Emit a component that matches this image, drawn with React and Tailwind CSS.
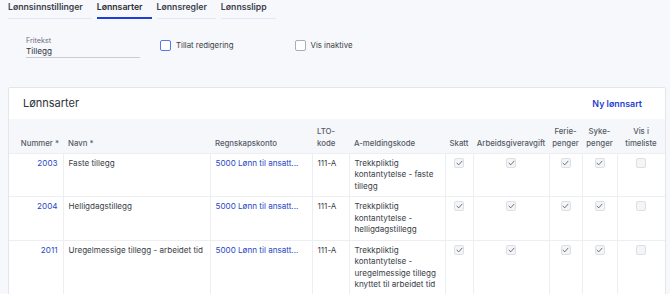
import { useState } from "react";

const tabs = ["Lønnsinnstillinger", "Lønnsarter", "Lønnsregler", "Lønnsslipp"];

const rows = [
  {
    nr: "2003",
    navn: "Faste tillegg",
    konto: "5000 Lønn til ansatt...",
    lto: "111-A",
    amelding: "Trekkpliktig kontantytelse - faste tillegg",
  },
  {
    nr: "2004",
    navn: "Helligdagstillegg",
    konto: "5000 Lønn til ansatt...",
    lto: "111-A",
    amelding: "Trekkpliktig kontantytelse - helligdagstillegg",
  },
  {
    nr: "2011",
    navn: "Uregelmessige tillegg - arbeidet tid",
    konto: "5000 Lønn til ansatt...",
    lto: "111-A",
    amelding:
      "Trekkpliktig kontantytelse - uregelmessige tillegg knyttet til arbeidet tid",
  },
];

const CellCheck = ({ checked }) => (
  <div className="flex justify-center">
    <span className="flex items-center justify-center w-[10px] h-[10px] rounded-[2px] border border-[#dcdfe4] bg-[#f4f5f7]">
      {checked && (
        <svg width="7" height="6" viewBox="0 0 7 6" fill="none">
          <path
            d="M1 3.2 L2.8 4.8 L6 1.2"
            stroke="#5b6170"
            strokeWidth="0.9"
            strokeLinecap="round"
            strokeLinejoin="round"
          />
        </svg>
      )}
    </span>
  </div>
);

const App = () => {
  const [active] = useState(1);

  return (
    <div
      className="w-[670px] h-[294px] overflow-hidden bg-[#f7f8fb] text-[#3a3e47]"
      style={{ fontFamily: "Inter, 'Noto Sans', sans-serif" }}
    >
      {/* Tabs */}
      <div className="flex gap-[5px] pl-2">
        {tabs.map((t, i) => (
          <div
            key={t}
            className={`pr-[9px] h-[19px] text-[8.7px] font-semibold leading-[15px] ${
              i === active
                ? "border-b-[2px] border-[#1d3fd4] text-[#2b2f38]"
                : "border-b-[1.5px] border-[#e2e7f3] text-[#3c414b]"
            }`}
          >
            {t}
          </div>
        ))}
      </div>

      {/* Filters */}
      <div className="flex items-start mt-[17px] pl-[26px]">
        <div className="w-[114px]">
          <div className="text-[7.2px] leading-[9px] text-[#6b7080]">Fritekst</div>
          <div className="text-[8.2px] leading-[12px] text-[#2f333c] border-b border-[#c9ccd3]">
            Tillegg
          </div>
        </div>
        <label className="flex items-center h-[11px] ml-[20px] mt-[4px]">
          <span className="w-[11px] h-[11px] rounded-[2px] border border-[#5b78e8] bg-white" />
          <span className="ml-[5px] text-[7.8px] text-[#3a3e47]">Tillat redigering</span>
        </label>
        <label className="flex items-center h-[11px] ml-[61px] mt-[4px]">
          <span className="w-[11px] h-[11px] rounded-[2px] border border-[#a9adb6] bg-white" />
          <span className="ml-[5px] text-[7.8px] text-[#3a3e47]">Vis inaktive</span>
        </label>
      </div>

      {/* Card */}
      <div className="ml-2 mt-[29px] w-[658px] bg-white border border-[#e4e6ea] rounded-[2px]">
        <div className="flex items-center justify-between h-[31px] pl-[14px] pr-[23px]">
          <h2 className="text-[11px] text-[#2f333c]">Lønnsarter</h2>
          <button className="text-[8.9px] font-semibold text-[#1f3fcf]">Ny lønnsart</button>
        </div>

        <table className="table-fixed w-full border-collapse text-[8.1px] leading-[11.5px]">
          <colgroup>
            <col className="w-[54px]" />
            <col className="w-[147px]" />
            <col className="w-[102px]" />
            <col className="w-[37px]" />
            <col className="w-[96px]" />
            <col className="w-[28px]" />
            <col className="w-[76px]" />
            <col className="w-[33px]" />
            <col className="w-[35px]" />
            <col />
          </colgroup>
          <thead>
            <tr className="bg-[#f6f7fa] h-[34px] text-[7.8px] leading-[12px] text-[#555a66]">
              <th className="align-bottom text-right px-[4px] pb-[4px] font-medium">Nummer *</th>
              <th className="align-bottom text-left px-[5px] pb-[4px] font-medium">Navn *</th>
              <th className="align-bottom text-left px-[5px] pb-[4px] font-medium">Regnskapskonto</th>
              <th className="align-bottom text-left px-[5px] pb-[4px] font-medium">
                LTO-
                <br />
                kode
              </th>
              <th className="align-bottom text-left px-[5px] pb-[4px] font-medium">A-meldingskode</th>
              <th className="align-bottom text-center pb-[4px] font-medium">Skatt</th>
              <th className="align-bottom text-center pb-[4px] font-medium">Arbeidsgiveravgift</th>
              <th className="align-bottom text-center pb-[4px] font-medium">
                Ferie-
                <br />
                penger
              </th>
              <th className="align-bottom text-center pb-[4px] font-medium">
                Syke-
                <br />
                penger
              </th>
              <th className="align-bottom text-center pb-[4px] font-medium">
                Vis i
                <br />
                timeliste
              </th>
            </tr>
          </thead>
          <tbody>
            {rows.map((r) => (
              <tr key={r.nr} className="border-t border-[#eceef1] align-top">
                <td className="text-right px-[5px] pt-[4px] pb-[4px] text-[#2747c7]">{r.nr}</td>
                <td className="border-l border-[#eceef1] px-[5px] pt-[4px]">{r.navn}</td>
                <td className="border-l border-[#eceef1] px-[5px] pt-[4px] text-[#2747c7] whitespace-nowrap">
                  {r.konto}
                </td>
                <td className="border-l border-[#eceef1] px-[5px] pt-[4px]">{r.lto}</td>
                <td className="border-l border-[#eceef1] px-[5px] pt-[4px] pb-[4px]">{r.amelding}</td>
                <td className="border-l border-[#eceef1] pt-[4px]">
                  <CellCheck checked />
                </td>
                <td className="border-l border-[#eceef1] pt-[4px]">
                  <CellCheck checked />
                </td>
                <td className="border-l border-[#eceef1] pt-[4px]">
                  <CellCheck checked />
                </td>
                <td className="border-l border-[#eceef1] pt-[4px]">
                  <CellCheck checked />
                </td>
                <td className="border-l border-[#eceef1] pt-[4px]">
                  <CellCheck checked={false} />
                </td>
              </tr>
            ))}
          </tbody>
        </table>
      </div>
    </div>
  );
};

export default App;
